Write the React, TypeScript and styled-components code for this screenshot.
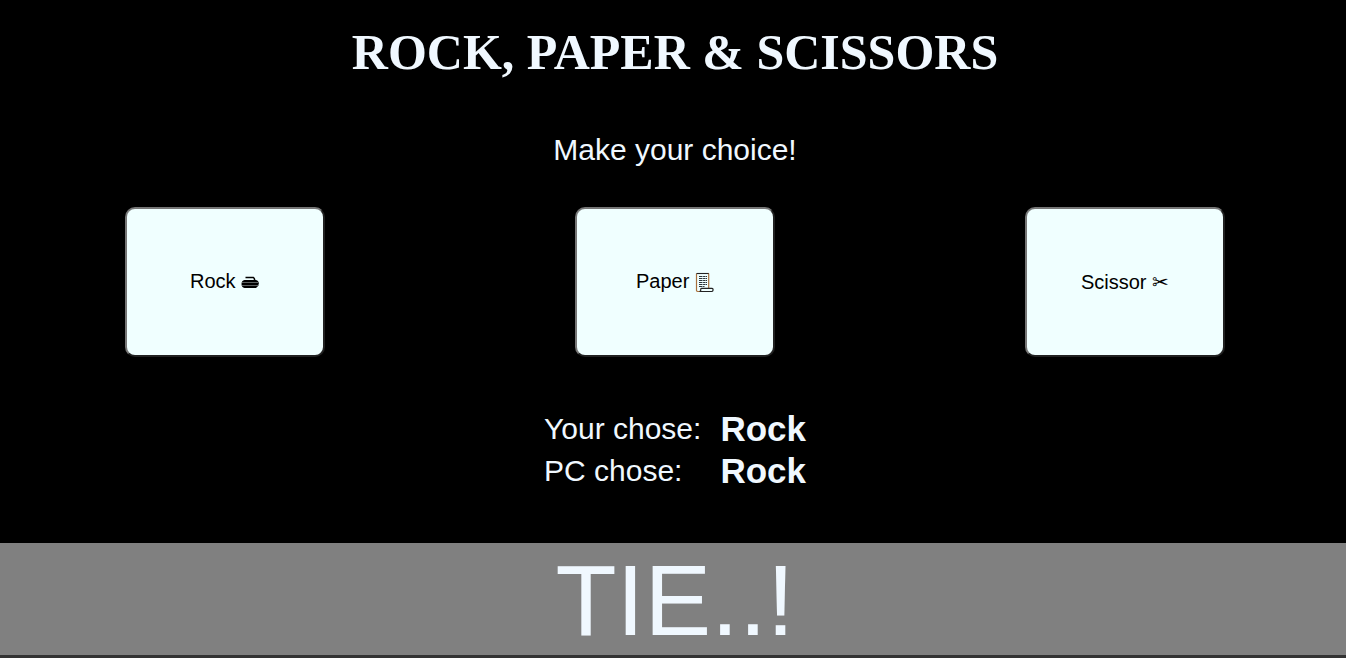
import React from "react";
import styled, { createGlobalStyle } from "styled-components";

const Global = createGlobalStyle`
  body { margin: 0; background: #000; color: aliceblue; font-family: "Liberation Sans", sans-serif; }
  #root { overflow-x: hidden; }
`;
const Page = styled.main`
  display: flex; flex-direction: column; width: calc(100% + 4px); text-align: center;
`;
const Title = styled.h1`
  margin: 24px 0 0; font: bold 50px/56px "Liberation Serif", serif;
`;
const Prompt = styled.p`margin: 53px 0 0; font-size: 30px; line-height: 34px;`;
const Choices = styled.div`
  display: grid; grid-template-columns: repeat(3, 1fr); justify-items: center;
  margin-top: 40px;
`;
const Choice = styled.button`
  width: 200px; height: 150px; border: 2px solid; border-radius: 10px;
  border-color: #767676 #212121 #212121 #767676;
  background: azure; color: #000; font: 20px "Liberation Sans", sans-serif;
`;
const Glyph = styled.svg`width: 19px; height: 22px; vertical-align: -6px;`;
const Results = styled.table`
  margin: 51px auto 0; border-spacing: 0; text-align: left; font-size: 30px; line-height: 42px;
  th { font-weight: normal; padding: 0 19px 0 0; }
  td { font-size: 35px; font-weight: bold; padding: 0; }
`;
const Verdict = styled.output`
  display: block; margin-top: 51px; background: gray; border-bottom: 3px solid #333;
  padding-top: 2px; font-size: 100px; line-height: 110px;
`;

const Stone = () => (
  <Glyph viewBox="0 0 19 22" aria-hidden="true">
    <path d="M4.5 5.5H12.4Q13.4 5.8 13.8 8.5" fill="none" stroke="#000" strokeWidth="1.6" />
    <path d="M3.5 8H15Q17.8 8.6 17.8 11.5T15 16H3.5Q0.5 15.4 0.5 12T3.5 8Z" fill="#000" />
    <path d="M1 10.5H17.4M1 13.5H17.4" stroke="#5c6060" strokeWidth="1" />
  </Glyph>
);
const Scroll = () => (
  <Glyph viewBox="0 0 19 22" aria-hidden="true">
    <path d="M1.5 1.5V18.5Q1.8 19.6 3 19.5H5" fill="none" stroke="#a8703c" strokeWidth="1.2" />
    <path d="M1.5 1.5H14" fill="none" stroke="#222" strokeWidth="1.1" />
    <path d="M13.7 1.5V16" fill="none" stroke="#a8703c" strokeWidth="1.2" />
    <path d="M4 4.5H12M4 6.5H12M4 8.5H12M4 10.5H12M4 12.5H12M4 14.5H9.5" stroke="#2b3338" strokeWidth="1" strokeDasharray="3.5 0.6 2 0.4" />
    <path d="M6.5 16.4H17Q18.1 16.5 18.1 17.8T17 19.5H4.5Q6.1 19 5.8 17.7T6.5 16.4Z" fill="azure" stroke="#222" strokeWidth="1.2" />
  </Glyph>
);

export default function App() {
  return (
    <Page>
      <Global />
      <Title>ROCK, PAPER &amp; SCISSORS</Title>
      <Prompt>Make your choice!</Prompt>
      <Choices>
        <Choice type="button">Rock <Stone /></Choice>
        <Choice type="button">Paper <Scroll /></Choice>
        <Choice type="button">Scissor ✂</Choice>
      </Choices>
      <Results>
        <tbody>
          <tr><th scope="row">Your chose:</th><td>Rock</td></tr>
          <tr><th scope="row">PC chose:</th><td>Rock</td></tr>
        </tbody>
      </Results>
      <Verdict>TIE..!</Verdict>
    </Page>
  );
}
